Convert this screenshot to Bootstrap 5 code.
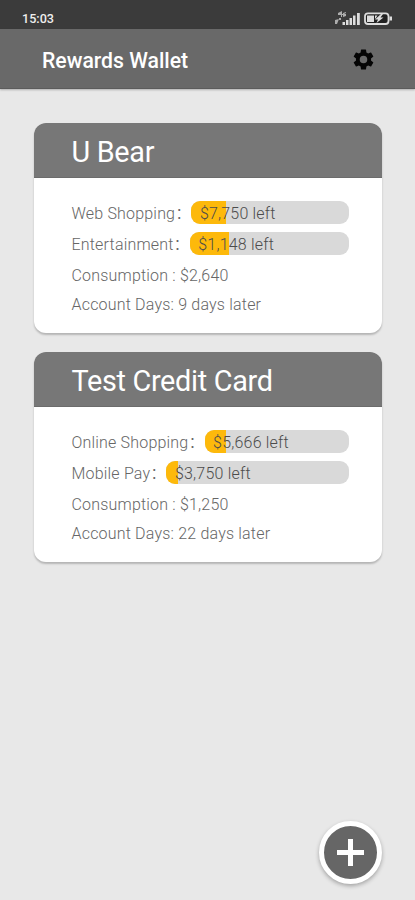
<!DOCTYPE html>
<html lang="en">
<head>
<meta charset="utf-8">
<meta name="viewport" content="width=device-width, initial-scale=1">
<title>Rewards Wallet</title>
<link href="https://cdn.jsdelivr.net/npm/bootstrap@5.3.0/dist/css/bootstrap.min.css" rel="stylesheet">
<style>
body{font-family:Roboto,"Noto Sans CJK SC",sans-serif;background:#e8e8e8;color:#747474;overflow:hidden}
.screen{height:900px}
.statusbar{height:29px;background:#3b3b3b;color:#eee;padding:9px 23px 0 22px;font-size:12.6px;line-height:20px;font-weight:500}
.appbar{height:60px;background:#696969;color:#fff;padding:0 41px 0 42px;border-bottom:1px solid #5c5c5c;box-shadow:0 1px 2px rgba(0,0,0,.25)}
.app-title{font-size:21.2px;font-weight:500;line-height:30px;padding-top:4px}
.gear{margin-top:2px}
.wallet{padding:34px 33px 0 34px;gap:19px}
.wallet-card{height:210px;border-radius:12px;background:#fff;overflow:hidden;box-shadow:0 2px 2px rgba(0,0,0,.22)}
.wallet-head{height:55px;background:#777;color:#fff;font-size:28.8px;letter-spacing:-.3px;line-height:58px;padding-left:37.5px;border-bottom:1px solid #6c6c6c;font-weight:400}
.wallet-body{padding:23px 33.5px 0 37.5px;font-size:16px;letter-spacing:.19px;line-height:25px;font-weight:300;color:#666}
.reward{height:23px;margin-bottom:8px}
.meter{height:23px;border-radius:9px;background:#d9d9d9;overflow:hidden}
.meter-fill{background:#fdb90b}
.meter-text{left:8.5px;top:0;color:#4c4c4c}
.detail{margin-bottom:4px}
.fab{right:33px;bottom:16px;width:63px;height:63px;border:5px solid #fff;background:#666;box-shadow:0 2px 4px rgba(0,0,0,.3)}
</style>
</head>
<body>
<div class="screen position-relative d-flex flex-column">
  <div class="statusbar d-flex justify-content-between">
    <span>15:03</span>
    <svg width="58" height="18" viewBox="0 0 58 18" fill="#ddd">
      <path d="M4 4l4-2v3h1v1H8v2H7V6H4zM9 4l3-1v1l-2 1h2v2l-3 1zM1 11l4-1-2 5H1zM5 9h2v2H5z" opacity=".7"/>
      <path d="M8.500 13H11v3H8.500zM12 11h2.500v5H12zM15.500 9H18v7h-2.500zM19 6.500h2.500V16H19zM23 4h2.800v12H23z"/>
      <rect x="31" y="4.300" width="23.500" height="10.700" rx="3" fill="#222" stroke="#ddd" stroke-width="1.800"/>
      <path d="M33 6.500h7v6.500h-7zM41 6.500h2.500l-2 3H41zM47 5l-6 5.500h3l-1.500 3.500 7-5.500h-3l2.500-3.500zM55.500 7.500H58v4h-2.500z"/>
    </svg>
  </div>
  <header class="appbar d-flex align-items-center justify-content-between">
    <h1 class="app-title m-0">Rewards Wallet</h1>
    <svg class="gear" width="21" height="21" viewBox="2 2 20 20" fill="#050505"><path d="M19.140 12.940a7.500 7.500 0 0 0 0-1.880l2.030-1.580a.5.5 0 0 0 .12-.61l-1.920-3.320a.5.5 0 0 0-.59-.22l-2.390.96a7 7 0 0 0-1.620-.94l-.36-2.540A.5.5 0 0 0 13.920 2.400h-3.840a.5.500 0 0 0-.48.410l-.36 2.540a7 7 0 0 0-1.620.940l-2.390-.960a.5.500 0 0 0-.59.220L2.720 8.870a.5.500 0 0 0 .12.610l2.030 1.580a7.500 7.500 0 0 0 0 1.880l-2.030 1.580a.5.500 0 0 0-.12.610l1.920 3.320c.12.220.370.290.590.220l2.390-.960c.5.380 1.030.700 1.620.940l.36 2.540c.05.240.240.410.480.410h3.840c.24 0 .440-.170.470-.410l.36-2.540a7 7 0 0 0 1.630-.940l2.390.960c.22.080.470 0 .590-.220l1.920-3.320a.5.500 0 0 0-.12-.610zM12 15.600a3.600 3.600 0 1 1 0-7.200 3.600 3.600 0 0 1 0 7.200z"/></svg>
  </header>
  <main class="wallet d-flex flex-column">
    <section class="wallet-card">
      <h2 class="wallet-head m-0">U Bear</h2>
      <div class="wallet-body">
        <div class="reward d-flex"><span class="text-nowrap">Web Shopping：</span>
          <div class="meter flex-grow-1 position-relative"><div class="meter-fill h-100" style="width:22.3%"></div><span class="meter-text position-absolute">$7,750 left</span></div></div>
        <div class="reward d-flex"><span class="text-nowrap">Entertainment：</span>
          <div class="meter flex-grow-1 position-relative"><div class="meter-fill h-100" style="width:24.7%"></div><span class="meter-text position-absolute">$1,148 left</span></div></div>
        <div class="detail">Consumption : $2,640</div>
        <div class="detail">Account Days: 9 days later</div>
      </div>
    </section>
    <section class="wallet-card">
      <h2 class="wallet-head m-0">Test Credit Card</h2>
      <div class="wallet-body">
        <div class="reward d-flex"><span class="text-nowrap">Online Shopping：</span>
          <div class="meter flex-grow-1 position-relative"><div class="meter-fill h-100" style="width:15%"></div><span class="meter-text position-absolute">$5,666 left</span></div></div>
        <div class="reward d-flex"><span class="text-nowrap">Mobile Pay：</span>
          <div class="meter flex-grow-1 position-relative"><div class="meter-fill h-100" style="width:6.2%"></div><span class="meter-text position-absolute">$3,750 left</span></div></div>
        <div class="detail">Consumption : $1,250</div>
        <div class="detail">Account Days: 22 days later</div>
      </div>
    </section>
  </main>
  <button class="fab position-absolute rounded-circle p-0 d-flex align-items-center justify-content-center" aria-label="Add card">
    <svg width="27" height="27" viewBox="0 0 27 27" stroke="#fff" stroke-width="5"><path d="M13.500 0v27M0 13.500h27"/></svg>
  </button>
</div>
<script src="https://cdn.jsdelivr.net/npm/bootstrap@5.3.0/dist/js/bootstrap.bundle.min.js"></script>
</body>
</html>
